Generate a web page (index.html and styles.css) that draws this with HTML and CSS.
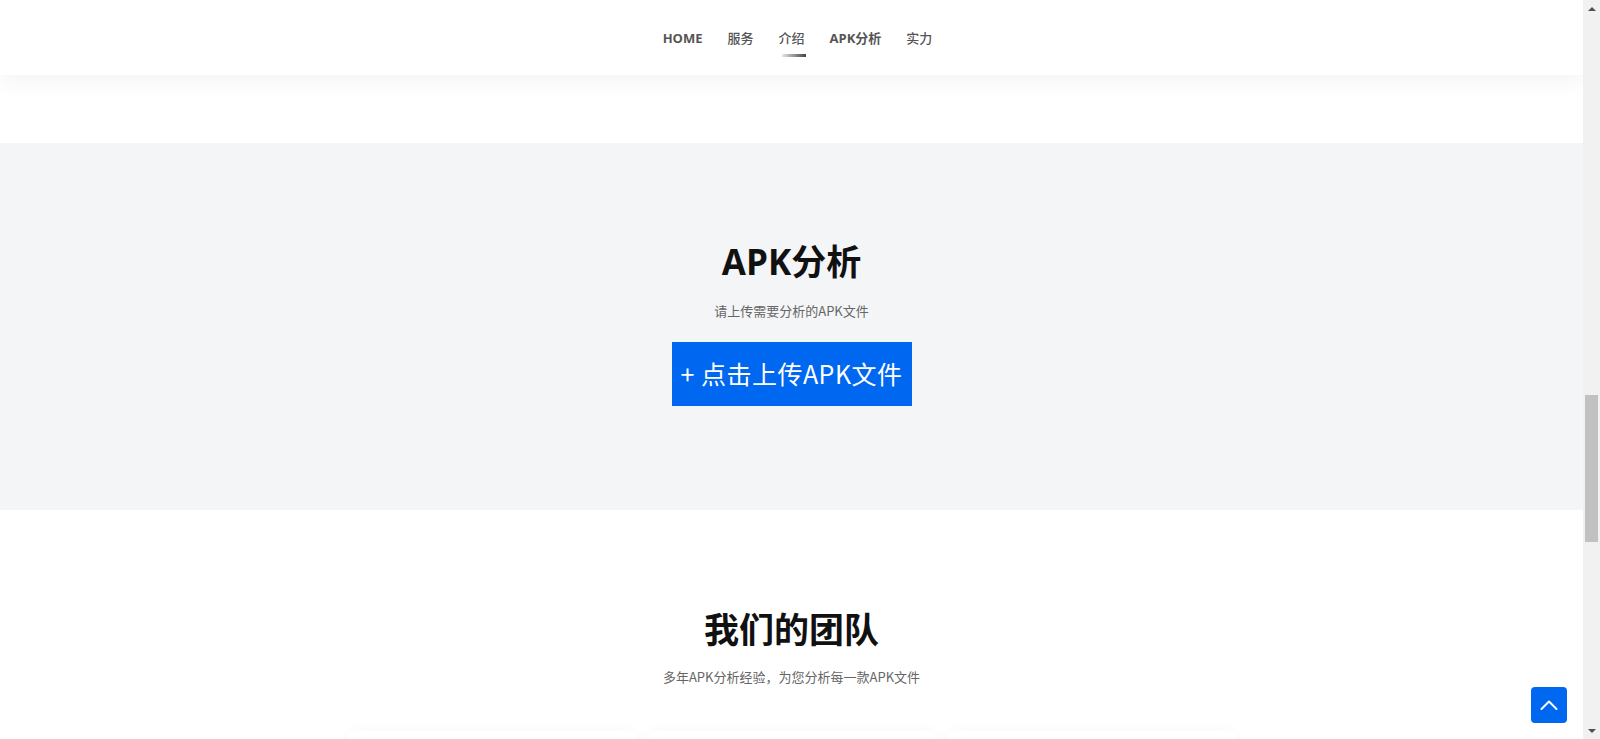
FILE: index.html
```html
<!DOCTYPE html>
<html lang="zh-CN">
<head>
<meta charset="utf-8">
<title>APK分析</title>
<link rel="stylesheet" href="styles.css">
</head>
<body>
<div class="page">
  <header class="topbar">
    <nav class="nav">
      <a class="nav-link latin" href="#">HOME</a>
      <a class="nav-link" href="#">服务</a>
      <a class="nav-link active" href="#">介绍</a>
      <a class="nav-link mixed" href="#">APK分析</a>
      <a class="nav-link" href="#">实力</a>
    </nav>
  </header>
  <div class="gap-white"></div>
  <section class="analysis">
    <h2 class="section-title">APK分析</h2>
    <p class="section-sub">请上传需要分析的APK文件</p>
    <button class="upload-btn">+&nbsp;点击上传APK文件</button>
  </section>
  <section class="team">
    <h2 class="section-title team-title">我们的团队</h2>
    <p class="section-sub">多年APK分析经验，为您分析每一款APK文件</p>
    <div class="cards">
      <div class="card"></div>
      <div class="card"></div>
      <div class="card"></div>
    </div>
  </section>
</div>
<div class="scrollbar">
  <div class="sb-btn"><span class="tri-up"></span></div>
  <div class="sb-track"><div class="sb-thumb"></div></div>
  <div class="sb-btn"><span class="tri-down"></span></div>
</div>
<a class="to-top" href="#">
  <svg width="18" height="12" viewBox="0 0 18 12"><path d="M1.5 10 L9 2.5 L16.5 10" fill="none" stroke="#fff" stroke-width="2" stroke-linecap="round" stroke-linejoin="round"/></svg>
</a>
</body>
</html>
```

FILE: styles.css
```css
html, body {
  margin: 0;
  padding: 0;
  height: 100%;
  overflow: hidden;
}
body {
  display: flex;
  font-family: "Open Sans", "Noto Sans CJK SC", sans-serif;
  background: #fff;
  color: #111;
}
.page {
  flex: 1;
  min-width: 0;
  overflow: hidden;
}
.topbar {
  height: 75px;
  background: #fff;
  box-shadow: 0 4px 24px rgba(0, 0, 0, 0.06);
  position: relative;
  z-index: 2;
  display: flex;
  align-items: center;
  justify-content: center;
}
.nav {
  display: flex;
  gap: 25px;
  margin-left: 12px;
  margin-top: 1px;
}
.nav-link {
  position: relative;
  font-family: "Open Sans", "Noto Sans CJK SC", sans-serif;
  font-size: 13px;
  font-weight: 500;
  line-height: 20px;
  color: #555;
  text-decoration: none;
}
.nav-link.latin,
.nav-link.mixed {
  font-weight: 700;
}
.nav-link.active::after {
  content: "";
  position: absolute;
  right: -1px;
  top: 26px;
  width: 24px;
  height: 3px;
  background: linear-gradient(to right, #e6e6e6, #444);
}
.gap-white {
  height: 68px;
}
.analysis {
  height: 367px;
  box-sizing: border-box;
  background: #f4f5f7;
  display: flex;
  flex-direction: column;
  align-items: center;
  padding-top: 97px;
}
.section-title {
  margin: 0;
  font-family: "Open Sans", "Noto Sans CJK SC", sans-serif;
  font-size: 35px;
  font-weight: 700;
  line-height: 44px;
  color: #111;
}
.section-sub {
  margin: 17px 0 0;
  font-family: "Noto Sans CJK SC", sans-serif;
  font-size: 13px;
  line-height: 20px;
  color: #666;
}
.upload-btn {
  margin-top: 21px;
  width: 240px;
  height: 64px;
  border: 0;
  padding: 0 4px 3px;
  background: #0068f0;
  color: #fff;
  font-family: "Noto Sans CJK SC", sans-serif;
  font-size: 25px;
  font-weight: 400;
  letter-spacing: 0.5px;
  white-space: nowrap;
  cursor: pointer;
}
.team {
  display: flex;
  flex-direction: column;
  align-items: center;
  padding-top: 96px;
}
.team-title {
  font-family: "Noto Sans CJK SC", sans-serif;
  font-weight: 700;
}
.cards {
  margin-top: 44px;
  display: flex;
  gap: 12px;
}
.card {
  width: 288px;
  height: 300px;
  background: #fff;
  border-radius: 8px;
  box-shadow: 0 0 16px rgba(0, 40, 100, 0.035);
}
.scrollbar {
  width: 17px;
  flex: none;
  background: #f1f1f1;
  display: flex;
  flex-direction: column;
}
.sb-btn {
  height: 17px;
  display: flex;
  align-items: center;
  justify-content: center;
}
.tri-up {
  width: 0;
  height: 0;
  border-left: 4px solid transparent;
  border-right: 4px solid transparent;
  border-bottom: 4px solid #505050;
}
.tri-down {
  width: 0;
  height: 0;
  border-left: 4px solid transparent;
  border-right: 4px solid transparent;
  border-top: 4px solid #505050;
}
.sb-track {
  flex: 1;
  padding: 0 2px;
}
.sb-thumb {
  margin-top: 378px;
  height: 147px;
  background: #c1c1c1;
}
.to-top {
  position: fixed;
  right: 33px;
  bottom: 16px;
  width: 36px;
  height: 36px;
  border-radius: 4px;
  background: #0068f0;
  display: flex;
  align-items: center;
  justify-content: center;
}
```
